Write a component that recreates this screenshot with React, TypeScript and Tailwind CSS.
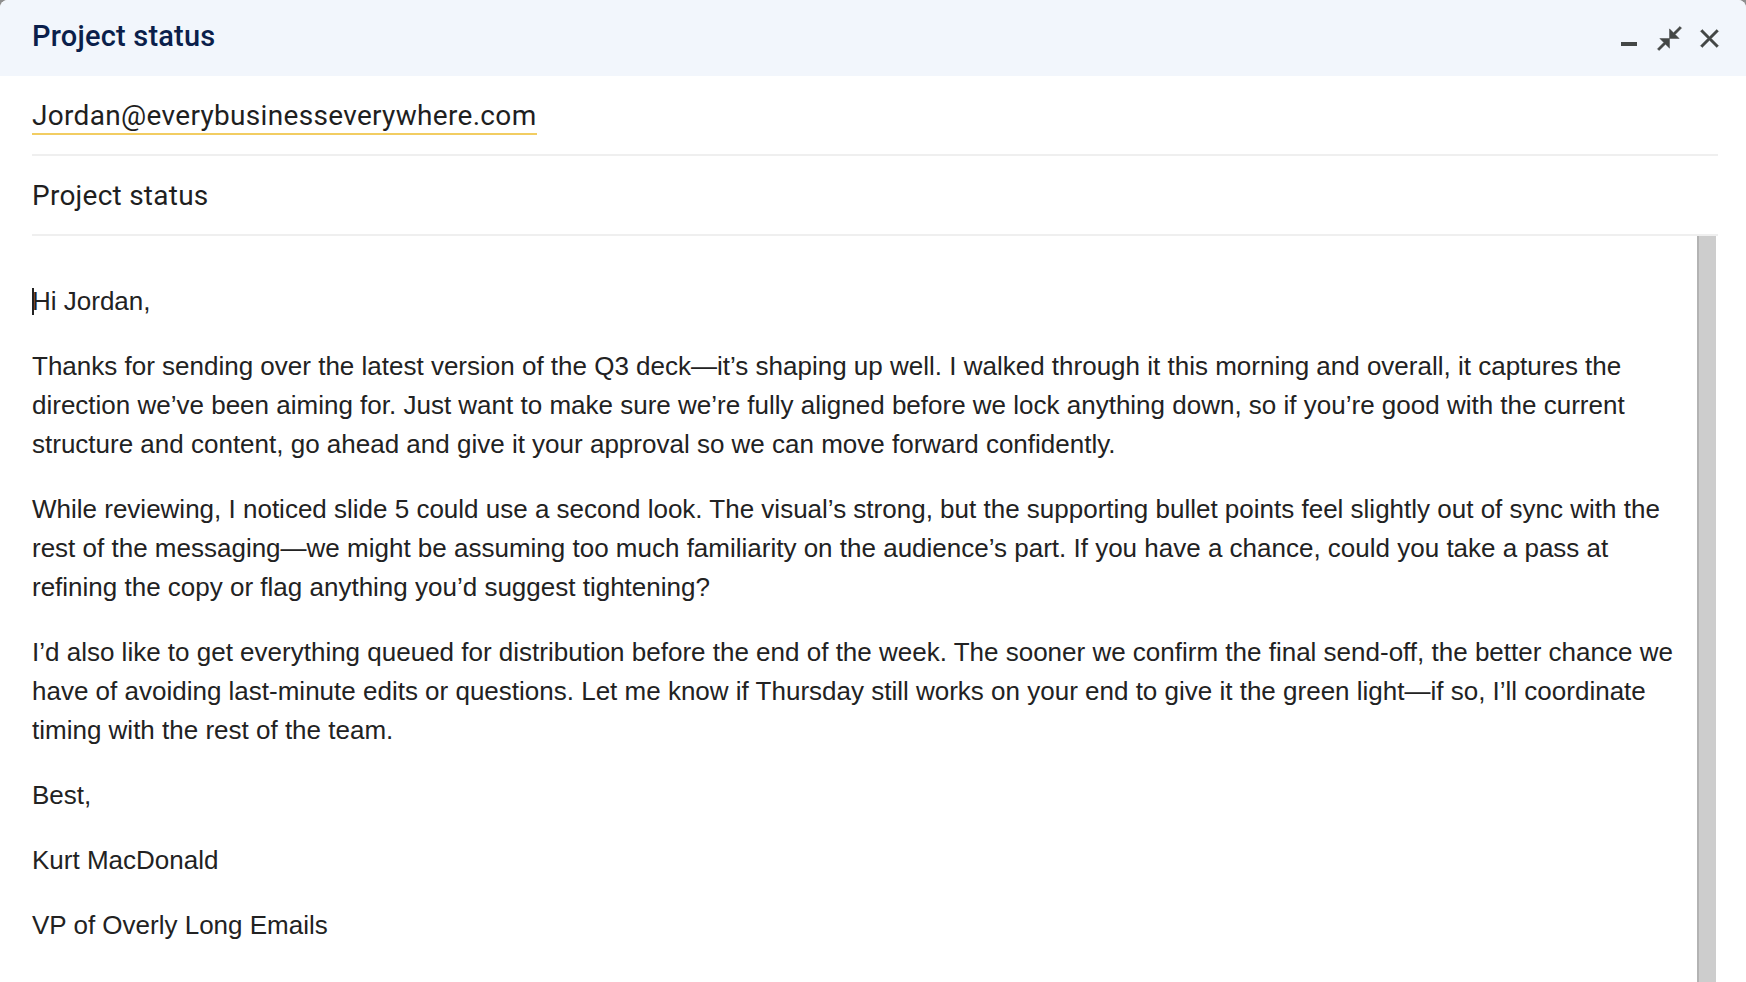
const bodyFont = { fontFamily: '"Liberation Sans", Arial, sans-serif' };

function MinimizeIcon() {
  return (
    <svg width="16" height="24" viewBox="0 0 16 24" className="text-[#444746]">
      <rect x="0" y="16" width="16" height="4" fill="currentColor" />
    </svg>
  );
}

function CloseFullscreenIcon() {
  return (
    <svg width="29" height="29" viewBox="0 0 24 24" className="text-[#444746]">
      <path
        fill="currentColor"
        stroke="currentColor"
        strokeWidth="0.4"
        d="M22 3.41L16.71 8.7 20 12h-8V4l3.29 3.29L20.59 2 22 3.41zM3.41 22l5.29-5.29L12 20v-8H4l3.29 3.29L2 20.59 3.41 22z"
      />
    </svg>
  );
}

function CloseIcon() {
  return (
    <svg width="31" height="31" viewBox="0 0 24 24" className="text-[#444746]">
      <path
        fill="currentColor"
        stroke="currentColor"
        strokeWidth="0.35"
        d="M19 6.41L17.59 5 12 10.59 6.41 5 5 6.41 10.59 12 5 17.59 6.41 19 12 13.41 17.59 19 19 17.59 13.41 12z"
      />
    </svg>
  );
}

const paragraphs: string[][] = [
  [
    'Thanks for sending over the latest version of the Q3 deck—it’s shaping up well. I walked through it this morning and overall, it captures the',
    'direction we’ve been aiming for. Just want to make sure we’re fully aligned before we lock anything down, so if you’re good with the current',
    'structure and content, go ahead and give it your approval so we can move forward confidently.',
  ],
  [
    'While reviewing, I noticed slide 5 could use a second look. The visual’s strong, but the supporting bullet points feel slightly out of sync with the',
    'rest of the messaging—we might be assuming too much familiarity on the audience’s part. If you have a chance, could you take a pass at',
    'refining the copy or flag anything you’d suggest tightening?',
  ],
  [
    'I’d also like to get everything queued for distribution before the end of the week. The sooner we confirm the final send-off, the better chance we',
    'have of avoiding last-minute edits or questions. Let me know if Thursday still works on your end to give it the green light—if so, I’ll coordinate',
    'timing with the rest of the team.',
  ],
  ['Best,'],
  ['Kurt MacDonald'],
  ['VP of Overly Long Emails'],
];

export default function App() {
  return (
    <div className="h-screen w-full bg-[#8e8e8e] overflow-hidden">
      <div className="h-full flex flex-col bg-white rounded-t-[8px] overflow-hidden font-[Roboto,sans-serif]">
        {/* title bar */}
        <div className="h-[76px] shrink-0 bg-[#f2f6fc] flex items-center justify-between pl-[32px] pr-[21px]">
          <h1 className="text-[29px] leading-[34px] font-medium tracking-[0.2px] text-[#0b1f4b] mb-[4px]">Project status</h1>
          <div className="flex items-center">
            <button className="mr-[18px] flex items-center">
              <MinimizeIcon />
            </button>
            <button className="mr-[10px] flex items-center">
              <CloseFullscreenIcon />
            </button>
            <button className="flex items-center">
              <CloseIcon />
            </button>
          </div>
        </div>

        {/* recipients */}
        <div className="h-[80px] shrink-0 ml-[32px] mr-[28px] pt-[4px] flex items-center border-b-2 border-[#efefef]">
          <span className="text-[28px] leading-[33px] tracking-[0.32px] text-[#1f1f1f] border-b-2 border-[#f2cd62] pb-px">
            Jordan@everybusinesseverywhere.com
          </span>
        </div>

        {/* subject */}
        <div className="h-[80px] shrink-0 ml-[32px] mr-[28px] flex items-center border-b-2 border-[#efefef]">
          <span className="text-[28px] leading-[33px] tracking-[0.25px] text-[#1f1f1f]">Project status</span>
        </div>

        {/* body */}
        <div className="flex-1 flex min-h-0">
          <div className="flex-1 pl-[32px] pt-[46px] text-[26px] leading-[39px] text-[#222222]" style={bodyFont}>
            <p className="relative mb-[26px] whitespace-nowrap">
              <span className="absolute left-0 top-[6px] w-[2px] h-[27px] bg-[#222222]" />
              Hi Jordan,
            </p>
            {paragraphs.map((lines, i) => (
              <p key={i} className="mb-[26px] whitespace-nowrap">
                {lines.map((line, j) => (
                  <span key={j} className="block">
                    {line}
                  </span>
                ))}
              </p>
            ))}
          </div>
          {/* scrollbar thumb */}
          <div className="w-[19px] shrink-0 mr-[30px] bg-[#cdcdcd] border-l-2 border-[#b3b3b3]" />
        </div>
      </div>
    </div>
  );
}
